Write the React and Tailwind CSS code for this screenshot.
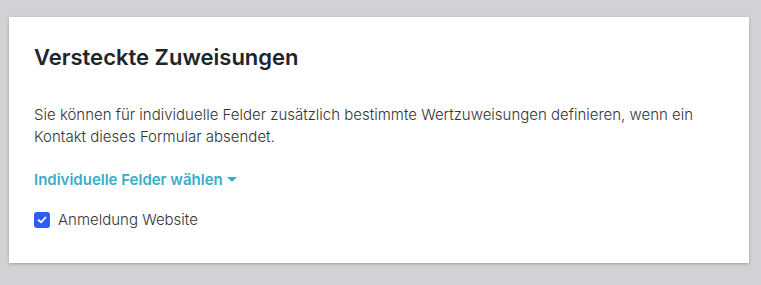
export default function App() {
  return (
    <div className="min-h-[285px] bg-[#d2d2d4] pt-[17px] pb-[22px] pl-[9px] pr-[12px]" style={{ fontFamily: "Inter, 'Noto Sans', sans-serif" }}>
      <div className="bg-white shadow-[0_1px_3px_rgba(0,0,0,0.25)] h-[246px] pl-[25px] pr-[25px] pt-[25px]">
        <h2 className="text-[22px] leading-[30px] font-semibold text-[#212529]">Versteckte Zuweisungen</h2>
        <p className="mt-[32px] text-[15px] leading-[22px] text-[#333] font-light">
          Sie können für individuelle Felder zusätzlich bestimmte Wertzuweisungen definieren, wenn ein Kontakt dieses Formular absendet.
        </p>
        <button className="mt-[21px] flex items-center gap-[4px] text-[15px] leading-[22px] font-semibold text-[#3cabc8]">
          Individuelle Felder wählen
          <svg width="10" height="6" viewBox="0 0 10 6"><path d="M0 0 H10 L5 5 Z" fill="#3cabc8" /></svg>
        </button>
        <label className="mt-[18px] flex items-center gap-[8px] text-[15px] leading-[22px] text-[#333] font-light">
          <span className="w-[16px] h-[16px] rounded-[3px] bg-[#2f5bf6] flex items-center justify-center">
            <svg width="10" height="8" viewBox="0 0 10 8"><path d="M1.5 4 L4 6.3 L8.5 1.5" stroke="white" strokeWidth="1.8" fill="none" strokeLinecap="round" strokeLinejoin="round" /></svg>
          </span>
          Anmeldung Website
        </label>
      </div>
    </div>
  );
}
